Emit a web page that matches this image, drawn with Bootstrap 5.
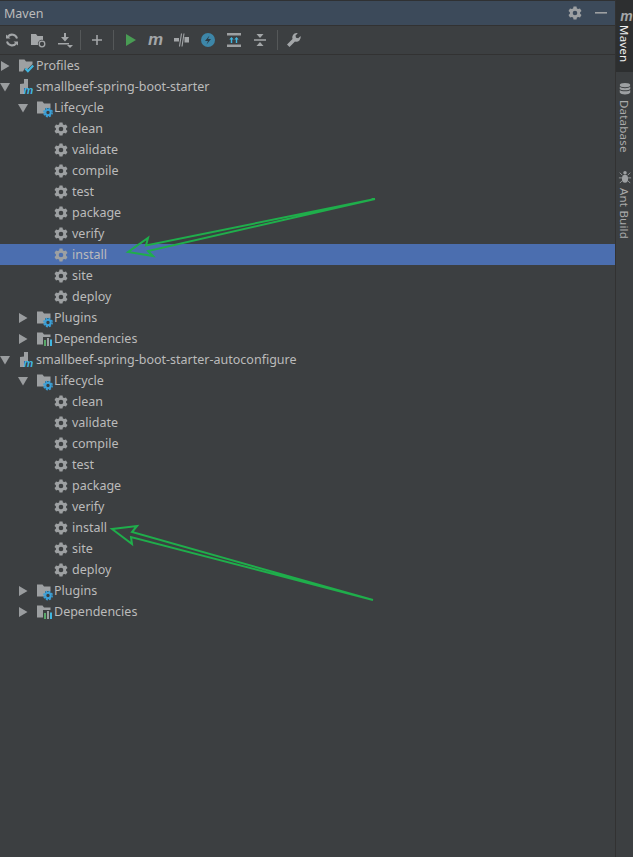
<!DOCTYPE html>
<html lang="en">
<head>
<meta charset="utf-8">
<title>Maven</title>
<link href="https://cdn.jsdelivr.net/npm/bootstrap@5.3.0/dist/css/bootstrap.min.css" rel="stylesheet">
<style>
html,body{height:100%;margin:0;background:#3c3f41;overflow:hidden}
body{font-family:"Noto Sans","Open Sans",sans-serif;font-size:12.5px;color:#bbb;line-height:21px}
.ide-root{height:857px;width:633px;position:relative;overflow:hidden}
.ide-main{width:615px;flex:none}
.ide-head{height:26px;background:#3c4a5a;border-top:1px solid #2f3133;border-bottom:1px solid #323232;padding:0 6px 0 4px;color:#bbb}
.head-ico{gap:10px}
.ide-tools{height:29px;border-bottom:1px solid #323232;padding-left:4px}
.tool{width:16px;height:16px;display:block;flex:none;overflow:visible}
.sep{width:1px;height:20px;background:#555859;flex:none}
.m7{margin-left:7px}.m8{margin-left:8px}.m9{margin-left:9px}.m10{margin-left:10px}.m11{margin-left:11px}
.ide-tree{list-style:none;margin:0;padding:0}
.ide-tree li{height:21px;display:flex;align-items:center;white-space:nowrap}
.ide-tree li.sel{background:#4b6eaf}
.lv0{padding-left:0}.lv1{padding-left:18px}.lv2{padding-left:53px}
.tw{width:10px;height:10px;flex:none;margin-right:8px}
.fi{width:16px;height:16px;flex:none;margin-right:2px;overflow:visible}
.lv2 .fi{margin-right:3px}
.ide-side{width:18px;flex:none;background:#3c3f41;border-left:1px solid #323232}
.tab{writing-mode:vertical-rl;font-size:11.5px;line-height:17px;color:#aaa;display:flex;align-items:center;gap:4px;letter-spacing:.2px}
.tab.on{background:#2d2f30;color:#eee;height:72px;padding-top:9px;gap:0}
.tab svg{width:14px;height:14px;flex:none}
.tab-db{margin-top:10px}
.tab-ant{margin-top:17px}
.mark-m{font-family:"Liberation Sans",sans-serif;font-style:italic;font-weight:700;font-size:14px;line-height:14px;color:#a3a6a8;writing-mode:horizontal-tb;margin-bottom:2px;margin-left:3px;display:block;align-self:flex-start;height:14px}
.arrows{position:absolute;left:0;top:0;pointer-events:none}
</style>
</head>
<body>
<svg width="0" height="0" class="position-absolute">
<defs>
<symbol id="open" viewBox="0 0 10 10"><path d="M0 1h10L5 9.500z" fill="#9a9d9f"/></symbol>
<symbol id="closed" viewBox="0 0 10 10"><path d="M1 0v10L9.500 5z" fill="#9a9d9f"/></symbol>
<symbol id="gear" viewBox="0 0 16 16"><path fill="#9da0a2" fill-rule="evenodd" d="M6.500 1.500h3l.4 1.900 1.300.7 1.800-.7 1.500 2.600-1.400 1.200v1.600l1.400 1.200-1.500 2.600-1.800-.7-1.300.7-.4 1.900h-3l-.4-1.900-1.300-.7-1.800.7L1.500 10l1.400-1.200V7.200L1.500 6 3 3.400l1.800.7 1.300-.7zM8 5.700a2.300 2.300 0 1 0 0 4.600 2.300 2.300 0 0 0 0-4.600z"/></symbol>
<symbol id="life" viewBox="0 0 16 16" overflow="visible"><path fill="#9da0a2" d="M1 1.500h5.500L8 3.500h6.500V8H9v5.500H1z"/><circle cx="12" cy="12.500" r="2.700" fill="none" stroke="#3ba0d8" stroke-width="2"/><circle cx="12" cy="12.500" r="4.200" fill="none" stroke="#3ba0d8" stroke-width="1.400" stroke-dasharray="2 1.300"/></symbol>
<symbol id="deps" viewBox="0 0 16 16" overflow="visible"><path fill="#9da0a2" d="M1 1.500h5.500L8 3.500h6.500V6H7v7.500H1z"/><rect x="8" y="9" width="2" height="6" fill="#59a869"/><rect x="11" y="7" width="2" height="8" fill="#9da0a2"/><rect x="14" y="8.500" width="2" height="6.500" fill="#40b6e0"/></symbol>
<symbol id="prof" viewBox="0 0 16 16" overflow="visible"><path fill="#9da0a2" d="M1 1.500h5.500L8 3.500h6.500V6L9 11.500 7 10l-2 3.500H1z"/><path d="M7.300 10.500l2.600 2.700 5.300-5.700" fill="none" stroke="#40b6e0" stroke-width="2.200"/></symbol>
<symbol id="mod" viewBox="0 0 16 16" overflow="visible"><path fill="#9da0a2" d="M6 0h4v9H6v6H2V5l4-.5z"/><text x="5.500" y="15" font-family="Liberation Sans" font-style="italic" font-weight="700" font-size="11" fill="#40b6e0">m</text></symbol>
</defs>
</svg>
<div class="ide-root d-flex">
<div class="ide-main d-flex flex-column">
<div class="ide-head d-flex align-items-center justify-content-between">
<span>Maven</span>
<span class="head-ico d-flex align-items-center">
<svg class="tool"><use href="#gear"/></svg>
<svg class="tool" viewBox="0 0 16 16"><rect x="2" y="7" width="12" height="1.600" fill="#9da0a2"/></svg>
</span>
</div>
<div class="ide-tools d-flex align-items-center">
<svg class="tool" viewBox="0 0 16 16"><path fill="none" stroke="#a3a6a8" stroke-width="2" d="M13 6.500A5.200 5.200 0 0 0 4 4.500M3 9.500a5.200 5.200 0 0 0 9 2"/><path fill="#a3a6a8" d="M2 2.500l4.500 4H2zM14 13.500l-4.500-4H14z"/></svg>
<svg class="tool m10" viewBox="0 0 16 16"><path fill="#a3a6a8" d="M1 2h5l1.500 2H13v4a4 4 0 0 0-5 5H1z"/><circle cx="12" cy="12" r="2.800" fill="none" stroke="#a3a6a8" stroke-width="1.300"/></svg>
<svg class="tool m11" viewBox="0 0 16 16"><path fill="#a3a6a8" d="M7 1h2v4h3L8 9.500 4 5h3zM1 11h11v1.500H1zM10 13h6l-3 3z"/></svg>
<span class="sep m7"></span>
<svg class="tool m8" viewBox="0 0 16 16"><path fill="#a3a6a8" d="M7.200 3h1.600v4.200H13v1.600H8.800V13H7.200V8.800H3V7.200h4.200z"/></svg>
<span class="sep m8"></span>
<svg class="tool m9" viewBox="0 0 16 16"><path fill="#499c54" d="M3 2l10 6-10 6z"/></svg>
<svg class="tool m9" viewBox="0 0 16 16"><text x="0" y="13" font-family="Liberation Sans" font-style="italic" font-weight="700" font-size="17" fill="#a3a6a8">m</text></svg>
<svg class="tool m10" viewBox="0 0 16 16"><path fill="#a3a6a8" d="M0 6h5v3.500H0zM10.500 5H15v5.500h-4.500z"/><path stroke="#a3a6a8" stroke-width="1.100" d="M5.500 14.500L7.500 1.500M8 14.500L10 1.500"/></svg>
<svg class="tool m10" viewBox="0 0 16 16"><circle cx="8" cy="8" r="7" fill="#3d86a8"/><path fill="#2b3a44" d="M9.500 3.500L5 9h3l-1.500 3.500 4.500-5.500H8z"/></svg>
<svg class="tool m10" viewBox="0 0 16 16"><path fill="#9da0a2" d="M1 1h14v2.500H1zM1 12.500h14V15H1z"/><path fill="#40b6e0" d="M4.800 6h1.400v5H4.800zM3.300 7.500L5.500 5l2.200 2.500zM9.800 6h1.400v5H9.800zM8.300 7.500L10.500 5l2.200 2.500z"/></svg>
<svg class="tool m10" viewBox="0 0 16 16"><path fill="#a3a6a8" d="M2 7.200h12v1.500H2zM4.500 2h7L8 6zM8 10l3.500 4h-7z"/></svg>
<span class="sep m9"></span>
<svg class="tool m8" viewBox="0 0 16 16"><path fill="#a3a6a8" d="M10.500 1a4.500 4.500 0 0 1 1.300.2L9.500 3.600l.5 2.200 2.200.5 2.400-2.300A4.500 4.500 0 0 1 9 9.500L3.500 15 1 12.500 6.500 7A4.500 4.500 0 0 1 10.500 1z"/></svg>
</div>
<ul class="ide-tree">
<li class="lv0"><svg class="tw"><use href="#closed"/></svg><svg class="fi"><use href="#prof"/></svg>Profiles</li>
<li class="lv0"><svg class="tw"><use href="#open"/></svg><svg class="fi"><use href="#mod"/></svg>smallbeef-spring-boot-starter</li>
<li class="lv1"><svg class="tw"><use href="#open"/></svg><svg class="fi"><use href="#life"/></svg>Lifecycle</li>
<li class="lv2"><svg class="fi"><use href="#gear"/></svg>clean</li>
<li class="lv2"><svg class="fi"><use href="#gear"/></svg>validate</li>
<li class="lv2"><svg class="fi"><use href="#gear"/></svg>compile</li>
<li class="lv2"><svg class="fi"><use href="#gear"/></svg>test</li>
<li class="lv2"><svg class="fi"><use href="#gear"/></svg>package</li>
<li class="lv2"><svg class="fi"><use href="#gear"/></svg>verify</li>
<li class="lv2 sel"><svg class="fi"><use href="#gear"/></svg>install</li>
<li class="lv2"><svg class="fi"><use href="#gear"/></svg>site</li>
<li class="lv2"><svg class="fi"><use href="#gear"/></svg>deploy</li>
<li class="lv1"><svg class="tw"><use href="#closed"/></svg><svg class="fi"><use href="#life"/></svg>Plugins</li>
<li class="lv1"><svg class="tw"><use href="#closed"/></svg><svg class="fi"><use href="#deps"/></svg>Dependencies</li>
<li class="lv0"><svg class="tw"><use href="#open"/></svg><svg class="fi"><use href="#mod"/></svg>smallbeef-spring-boot-starter-autoconfigure</li>
<li class="lv1"><svg class="tw"><use href="#open"/></svg><svg class="fi"><use href="#life"/></svg>Lifecycle</li>
<li class="lv2"><svg class="fi"><use href="#gear"/></svg>clean</li>
<li class="lv2"><svg class="fi"><use href="#gear"/></svg>validate</li>
<li class="lv2"><svg class="fi"><use href="#gear"/></svg>compile</li>
<li class="lv2"><svg class="fi"><use href="#gear"/></svg>test</li>
<li class="lv2"><svg class="fi"><use href="#gear"/></svg>package</li>
<li class="lv2"><svg class="fi"><use href="#gear"/></svg>verify</li>
<li class="lv2"><svg class="fi"><use href="#gear"/></svg>install</li>
<li class="lv2"><svg class="fi"><use href="#gear"/></svg>site</li>
<li class="lv2"><svg class="fi"><use href="#gear"/></svg>deploy</li>
<li class="lv1"><svg class="tw"><use href="#closed"/></svg><svg class="fi"><use href="#life"/></svg>Plugins</li>
<li class="lv1"><svg class="tw"><use href="#closed"/></svg><svg class="fi"><use href="#deps"/></svg>Dependencies</li>
</ul>
</div>
<div class="ide-side d-flex flex-column">
<div class="tab on"><span class="mark-m">m</span>Maven</div>
<div class="tab tab-db"><svg viewBox="0 0 16 16"><ellipse cx="8" cy="3.500" rx="6" ry="2.500" fill="#9da0a2"/><path fill="#9da0a2" d="M2 5.500c1 2 11 2 12 0V8c-1 2-11 2-12 0zM2 9c1 2 11 2 12 0v3c-1 3-11 3-12 0z"/></svg>Database</div>
<div class="tab tab-ant"><svg viewBox="0 0 16 16"><circle cx="8" cy="3" r="2" fill="#9da0a2"/><ellipse cx="8" cy="10" rx="3.500" ry="4.500" fill="#9da0a2"/><path stroke="#9da0a2" fill="none" d="M5 6L2 3M11 6l3-3M4.500 9H1M11.500 9H15M5 12l-3 3M11 12l3 3"/></svg>Ant Build</div>
</div>
<svg class="arrows" width="633" height="857" fill="none" stroke="#1fae4b" stroke-width="2" stroke-linejoin="miter">
<path d="M128 252L148 238 146 245.500 375 199 148 251 153 256z"/>
<path d="M112 529L137 526 132 532 373 600 131 537 132 544z"/>
</svg>
</div>
<script src="https://cdn.jsdelivr.net/npm/bootstrap@5.3.0/dist/js/bootstrap.bundle.min.js"></script>
</body>
</html>
